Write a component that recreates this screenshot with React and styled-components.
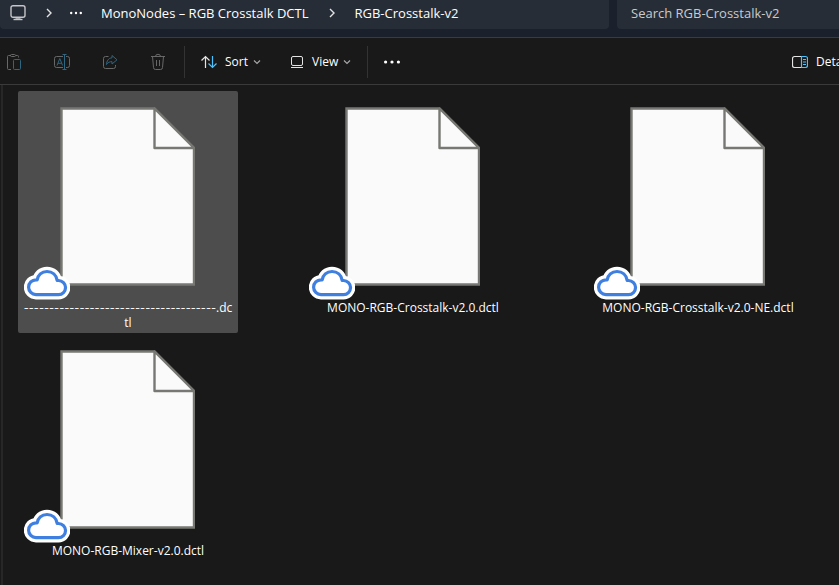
import { useState } from "react";
import styled, { createGlobalStyle } from "styled-components";

const files = [
  { id: 1, dashes: 38, name: ".dctl" },
  { id: 2, name: "MONO-RGB-Crosstalk-v2.0.dctl" },
  { id: 3, name: "MONO-RGB-Crosstalk-v2.0-NE.dctl" },
  { id: 4, name: "MONO-RGB-Mixer-v2.0.dctl" },
];

const MonitorIcon = () => (
  <svg width="16" height="18" viewBox="0 0 16 18" fill="none" stroke="#c4c6c8">
    <rect x="1" y="1.7" width="14" height="11.6" rx="2" strokeWidth="1.4" />
    <path d="M3.5 15.5h9" strokeWidth="1.4" />
    <path d="M5.5 14.5h5" strokeWidth="2" opacity="0.7" />
  </svg>
);

const CrumbArrow = () => (
  <svg width="8" height="10" viewBox="0 0 8 10" fill="none" stroke="#e2e3e5">
    <path d="M2 1l4 4-4 4" strokeWidth="1.4" />
  </svg>
);

const DotsIcon = ({ size = 12, r = 1.2 }) => (
  <svg width={size} height="4" viewBox={`0 0 ${size} 4`} fill="#fff">
    <circle cx={r} cy="2" r={r} />
    <circle cx={size / 2} cy="2" r={r} />
    <circle cx={size - r} cy="2" r={r} />
  </svg>
);

const DownArrow = () => (
  <svg width="8" height="6" viewBox="0 0 8 6" fill="none" stroke="#a8a8a8">
    <path d="M1 1.5l3 3 3-3" strokeWidth="1.2" />
  </svg>
);

const PasteIcon = () => (
  <svg width="16" height="18" viewBox="0 0 16 18" fill="none">
    <path
      d="M5 2.5H2.5a1 1 0 0 0-1 1v12a1 1 0 0 0 1 1H5M10 2.5h1.5a1 1 0 0 1 1 1v1"
      stroke="#686868"
    />
    <rect x="4.5" y="1.5" width="5" height="2" rx="1" stroke="#686868" />
    <rect x="7.5" y="6.5" width="7" height="10" rx="1" stroke="#2f6681" />
  </svg>
);

const RenameIcon = () => (
  <svg width="18" height="18" viewBox="0 0 18 18" fill="none">
    <path
      d="M10 3.5H3.5a2 2 0 0 0-2 2v7a2 2 0 0 0 2 2H10M13 3.5h1.5a2 2 0 0 1 2 2v7a2 2 0 0 1-2 2H13"
      stroke="#686868"
    />
    <path
      d="M4 12.5l2.8-7 2.8 7M5 10.3h3.7M11.5 1.5v15M9.5 1.5h4M9.5 16.5h4"
      stroke="#2f6681"
    />
  </svg>
);

const ShareIcon = () => (
  <svg width="16" height="18" viewBox="0 0 16 18" fill="none">
    <path
      d="M6.5 3.5H3.5a2 2 0 0 0-2 2v8a2 2 0 0 0 2 2h8a2 2 0 0 0 2-2V12"
      stroke="#686868"
    />
    <path
      d="M10 2.5l5 4.3-5 4.2V8.7C7.5 8.5 6 9.5 4.5 11.5 4.7 8 6.5 5 10 4.8z"
      stroke="#2f6681"
      strokeLinejoin="round"
    />
  </svg>
);

const TrashIcon = () => (
  <svg width="16" height="18" viewBox="0 0 16 18" fill="none" stroke="#686868">
    <path d="M1 3.5h14M5.5 3.5a2.5 2.2 0 0 1 5 0M2.5 3.5l1 11a2 2 0 0 0 2 2h5a2 2 0 0 0 2-2l1-11" />
    <path d="M6.5 7v6M9.5 7v6" />
  </svg>
);

const SortIcon = () => (
  <svg width="16" height="14" viewBox="0 0 16 14" fill="none" strokeWidth="1.2">
    <path d="M4.5 13V1.5M0.5 5.5l4-4 4 4" stroke="#e4e4e4" />
    <path d="M11.5 1v11.5M7.5 8.5l4 4 4-4" stroke="#4cc2ff" />
  </svg>
);

const ViewIcon = () => (
  <svg width="14" height="14" viewBox="0 0 14 14" fill="none" stroke="#e4e4e4">
    <rect x="1.5" y="1.5" width="11" height="9" rx="1.5" />
    <path d="M1 12.5h12" />
  </svg>
);

const DetailsIcon = () => (
  <svg width="16" height="14" viewBox="0 0 16 14" fill="none" strokeWidth="1.2">
    <path d="M9.5 1.5H2.5a2 2 0 0 0-2 2v7a2 2 0 0 0 2 2h7" stroke="#e4e4e4" />
    <path d="M9.5 1.5h4a2 2 0 0 1 2 2v7a2 2 0 0 1-2 2h-4z" stroke="#4cc2ff" />
    <path d="M11 4.5h3M11 7h3M11 9.5h3" stroke="#4cc2ff" />
  </svg>
);

const PageIcon = () => (
  <svg width="135" height="179" viewBox="0 0 135 179">
    <path
      d="M1.5 1.5H94.500L134 41V177.500H1.500z"
      fill="#fafafa"
      stroke="#777773"
      strokeWidth="2.4"
    />
    <path
      d="M94.500 1.500V41H134z"
      fill="#fafafa"
      stroke="#777773"
      strokeWidth="2.4"
      strokeLinejoin="round"
    />
  </svg>
);

const cloudPath =
  "M12 28.6a7.4 7.4 0 0 1 0-14.8h1.2C13.8 9 17.7 5.500 23 5.500s9.400 3.500 10.200 9h1.300a7 7 0 0 1 0 14.100z";

const CloudIcon = () => (
  <svg width="46" height="34" viewBox="0 0 46 34" strokeLinejoin="round">
    <path d={cloudPath} fill="#fff" stroke="#fff" strokeWidth="9.6" />
    <path d={cloudPath} fill="#fff" stroke="#3f7fe0" strokeWidth="3.2" />
  </svg>
);

const App = () => {
  const [selected, setSelected] = useState(1);

  return (
    <Window>
      <GlobalStyle />
      <AddressRow>
        <AddressBar aria-label="Address">
          <Crumb href="#pc" aria-label="This PC">
            <MonitorIcon />
          </Crumb>
          <CrumbArrow />
          <CrumbButton aria-label="More folders">
            <DotsIcon />
          </CrumbButton>
          <Crumb href="#parent">MonoNodes – RGB Crosstalk DCTL</Crumb>
          <CrumbArrow />
          <Crumb href="#current">RGB-Crosstalk-v2</Crumb>
        </AddressBar>
        <SearchInput
          type="search"
          aria-label="Search"
          placeholder="Search RGB-Crosstalk-v2"
        />
      </AddressRow>
      <Toolbar>
        <IconGroup>
          <IconButton aria-label="Paste">
            <PasteIcon />
          </IconButton>
          <IconButton aria-label="Rename">
            <RenameIcon />
          </IconButton>
          <IconButton aria-label="Share">
            <ShareIcon />
          </IconButton>
          <IconButton aria-label="Delete">
            <TrashIcon />
          </IconButton>
        </IconGroup>
        <MenuGroup>
          <MenuButton>
            <SortIcon />
            <Label>Sort</Label>
            <DownArrow />
          </MenuButton>
          <MenuButton>
            <ViewIcon />
            <Label>View</Label>
            <DownArrow />
          </MenuButton>
        </MenuGroup>
        <MoreButton aria-label="See more">
          <DotsIcon size={16} r={1.6} />
        </MoreButton>
        <DetailsButton>
          <DetailsIcon />
          <Label>Details</Label>
        </DetailsButton>
      </Toolbar>
      <Content>
        <FileGrid>
          {files.map((file) => (
            <li key={file.id}>
              <FileTile
                $selected={selected === file.id}
                onClick={() => setSelected(file.id)}
              >
                <Thumbnail>
                  <PageIcon />
                  <CloudBadge>
                    <CloudIcon />
                  </CloudBadge>
                </Thumbnail>
                <FileName>
                  {file.dashes && <Dashes>{"-".repeat(file.dashes)}</Dashes>}
                  {file.name}
                </FileName>
              </FileTile>
            </li>
          ))}
        </FileGrid>
      </Content>
    </Window>
  );
};

const GlobalStyle = createGlobalStyle`
  * {
    box-sizing: border-box;
  }

  body {
    margin: 0;
    overflow: hidden;
    background: #191919;
    font-family: "Open Sans", "Noto Sans", sans-serif;
  }

  button,
  input {
    font-family: inherit;
  }

  svg {
    display: block;
    flex-shrink: 0;
  }
`;

const Window = styled.div`
  display: flex;
  flex-direction: column;
  min-height: 100vh;
  color: #fff;
  background: #191919;
`;

const AddressRow = styled.header`
  display: flex;
  gap: 8px;
  height: 38px;
  padding-bottom: 8px;
  background: #1a202c;
  border-bottom: 1px solid #393b3e;
`;

const AddressBar = styled.nav`
  display: flex;
  flex: 1;
  align-items: center;
  gap: 17px;
  padding: 0 8px 4px;
  background: #272d37;
  border-radius: 0 0 4px 4px;
`;

const Crumb = styled.a`
  padding: 0 2px;
  color: #fff;
  font-size: 13px;
  line-height: 20px;
  text-decoration: none;
  white-space: nowrap;
`;

const CrumbButton = styled.button`
  padding: 0;
  border: none;
  background: none;
`;

const SearchInput = styled.input`
  width: 222px;
  padding: 0 14px 4px;
  color: #fff;
  font-size: 13px;
  background: #272d37;
  border: none;
  border-radius: 0 0 0 4px;
  outline: none;

  &::placeholder {
    color: #c9cbce;
    opacity: 1;
  }
`;

const Toolbar = styled.div`
  display: flex;
  align-items: center;
  height: 47px;
  padding-top: 2px;
  border-bottom: 1px solid #3a3a3a;
`;

const IconGroup = styled.div`
  display: flex;
  padding-right: 2px;
`;

const IconButton = styled.button`
  display: flex;
  align-items: center;
  justify-content: center;
  width: 48px;
  height: 32px;
  padding: 0;
  border: none;
  background: none;

  &:first-child {
    width: 38px;
    padding-right: 10px;
  }
`;

const MenuGroup = styled.div`
  display: flex;
  gap: 29px;
  height: 32px;
  padding: 0 16px;
  border-left: 1px solid #333;
  border-right: 1px solid #333;
`;

const MenuButton = styled.button`
  display: flex;
  align-items: center;
  padding: 0;
  color: #fff;
  font-size: 12px;
  line-height: 16px;
  white-space: nowrap;
  border: none;
  background: none;
`;

const Label = styled.span`
  padding: 0 5px 0 8px;
`;

const MoreButton = styled(MenuButton)`
  height: 32px;
  padding: 0 16px;
`;

const DetailsButton = styled(MenuButton)`
  width: 47px;
  margin-left: auto;
  overflow: hidden;
`;

const Content = styled.main`
  flex: 1;
  margin-left: 1px;
  padding: 6px 15px;
  border-left: 2px solid #272727;
`;

const FileGrid = styled.ul`
  display: grid;
  grid-template-columns: repeat(auto-fill, 220px);
  gap: 1px 65px;
  margin: 0;
  padding: 0;
  list-style: none;
`;

const FileTile = styled.button`
  display: flex;
  flex-direction: column;
  align-items: center;
  width: 100%;
  height: 242px;
  padding: 16px 5px 0;
  color: #fff;
  border: none;
  border-radius: 2px;
  background: ${({ $selected }) => ($selected ? "#4d4d4d" : "transparent")};
`;

const Thumbnail = styled.div`
  position: relative;
  width: 100%;
  padding: 0 0 14px 37px;
`;

const CloudBadge = styled.span`
  position: absolute;
  bottom: 0;
  left: 1px;
`;

const FileName = styled.span`
  width: 100%;
  font-size: 12px;
  line-height: 15px;
  text-align: center;
  word-break: break-all;
`;

const Dashes = styled.span`
  font-family: Inter, sans-serif;
  font-size: 11px;
  line-height: 1;
`;

export default App;
